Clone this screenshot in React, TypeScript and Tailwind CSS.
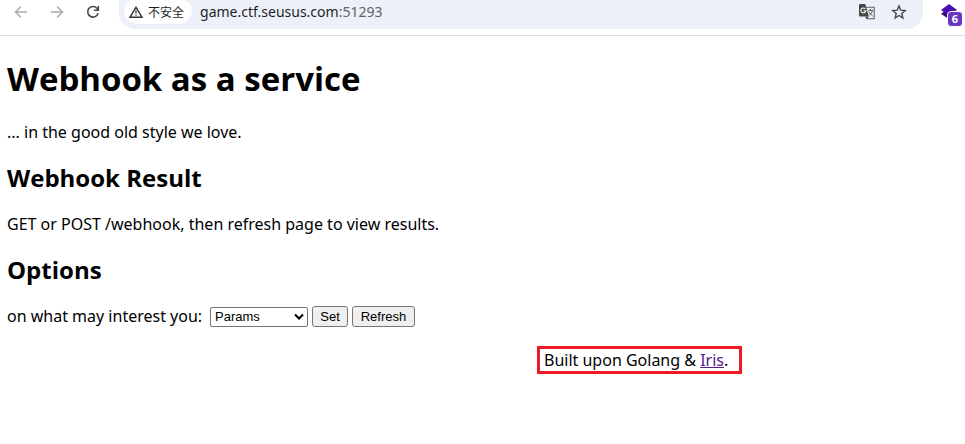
import React from "react";

const heading = "font-['Open_Sans','Noto_Sans',sans-serif] font-bold text-black";
const control =
  "h-[21px] rounded-[3px] border border-[#767676] bg-[#efefef] font-['Liberation_Sans',Arial,sans-serif] text-[13px] leading-4 text-black";

function BackIcon() {
  return (
    <svg width="14" height="14" viewBox="0 0 14 14" fill="none" stroke="currentColor" strokeWidth="1.5" aria-hidden="true">
      <path d="M13 7H2M7 1.5 1.5 7 7 12.5" />
    </svg>
  );
}

function ForwardIcon() {
  return (
    <svg width="14" height="14" viewBox="0 0 14 14" fill="none" stroke="currentColor" strokeWidth="1.5" aria-hidden="true">
      <path d="M1 7h11M7 1.5 12.5 7 7 12.5" />
    </svg>
  );
}

function ReloadIcon() {
  return (
    <svg width="14" height="14" viewBox="0 0 14 14" fill="none" stroke="currentColor" strokeWidth="1.6" aria-hidden="true">
      <path d="M12.1 8.2A5.3 5.3 0 1 1 10.9 3.2L12.4 4.8" />
      <path d="M12.3 1v4.2H8" />
    </svg>
  );
}

function WarningIcon() {
  return (
    <svg width="14" height="12" viewBox="0 0 14 12" aria-hidden="true">
      <path d="M7 1.3 13 11.2H1Z" fill="none" stroke="#333" strokeWidth="1.5" />
      <path d="M7 4.4v3.2M7 8.4v1.4" stroke="#333" strokeWidth="1.3" />
    </svg>
  );
}

function TranslateIcon() {
  return (
    <svg width="18" height="18" viewBox="0 0 18 18" aria-hidden="true">
      <path d="M8 4.2h8.2v11.6H9" fill="none" stroke="#5f6063" strokeWidth="1.1" />
      <path d="M2 1h5.3l3.5 12.6H2a1 1 0 0 1-1-1V2a1 1 0 0 1 1-1Z" fill="#474747" />
      <path d="M7.2 13.6h3.6l-2 3Z" fill="#474747" />
      <path d="M7.2 5.8A2.5 2.5 0 1 0 7.8 7.7H5.4" fill="none" stroke="#fff" strokeWidth="1.1" />
      <path d="M10.3 7.4h5M12.5 6v1.4M14.4 7.5c-.4 2-1.6 3.7-3 4.7M11 8.7c.7 1.6 2 3 3.6 4.3" fill="none" stroke="#5f6063" />
    </svg>
  );
}

function StarIcon() {
  return (
    <svg width="16" height="16" viewBox="0 0 16 16" aria-hidden="true">
      <path d="m8 1.9 1.7 4.3 4.6.3-3.5 3 1.1 4.5L8 11.5 4.1 14l1.1-4.5-3.5-3 4.6-.3Z" fill="none" stroke="#474747" strokeWidth="1.4" />
    </svg>
  );
}

function LayersIcon() {
  return (
    <svg width="18" height="16" viewBox="0 0 18 16" aria-hidden="true">
      <path d="m1 9.8 8-5 8 5-8 5.4Z" fill="#2b0a7c" />
      <path d="m1 6 8-6 8 6-8 6Z" fill="#4a0db0" />
    </svg>
  );
}

function Toolbar() {
  return (
    <header className="flex h-9 items-start border-b border-[#dedfe1] bg-white">
      <nav className="flex h-6 items-center gap-[22px] pl-[14px] text-[#aaaaaa]">
        <button type="button" aria-label="Back"><BackIcon /></button>
        <button type="button" aria-label="Forward"><ForwardIcon /></button>
        <button type="button" aria-label="Reload" className="text-[#474747]"><ReloadIcon /></button>
      </nav>
      <div className="ml-[19px] flex h-[29px] min-w-0 flex-1 items-start rounded-b-[16px] bg-[#ecf0f9] pl-[5px] pr-4">
        <button type="button" className="flex h-6 shrink-0 items-center gap-[5px] rounded-b-[14px] rounded-t-[10px] bg-white px-[5px] pr-2 font-['Noto_Sans_CJK_SC',sans-serif] text-[12px] leading-6 text-[#1f1f1f]">
          <WarningIcon />
          不安全
        </button>
        <div className="min-w-0 flex-1 pl-2 font-['Noto_Sans','Open_Sans',sans-serif] text-[14px] leading-6 text-[#1f1f1f]">
          game.ctf.seusus.com<span className="text-[#5f6368]">:51293</span>
        </div>
        <div className="flex h-6 items-center gap-[15px]">
          <button type="button" aria-label="Translate"><TranslateIcon /></button>
          <button type="button" aria-label="Bookmark"><StarIcon /></button>
        </div>
      </div>
      <button type="button" aria-label="Extension" className="relative ml-[17px] mr-[7px] mt-1 flex h-[22px] w-[18px] items-start">
        <LayersIcon />
        <span className="absolute left-[7px] top-[7px] h-4 w-4 rounded-[4px] border border-white bg-[#6b35c3] text-center font-['Open_Sans',sans-serif] text-[11px] font-bold leading-[14px] text-white">
          6
        </span>
      </button>
    </header>
  );
}

export default function App() {
  return (
    <div className="min-h-screen bg-white font-['Noto_Sans','Open_Sans',sans-serif] text-[16px] leading-[22px] text-black">
      <Toolbar />
      <main className="px-[7px] pt-5">
        <h1 className={`${heading} text-[33px] leading-[46px]`}>Webhook as a service</h1>
        <p className="mt-[19px]">... in the good old style we love.</p>
        <h2 className={`${heading} mt-[18px] text-[24px] leading-[34px]`}>Webhook Result</h2>
        <p className="mt-[18px]">GET or POST /webhook, then refresh page to view results.</p>
        <h2 className={`${heading} mt-[18px] text-[24px] leading-[34px]`}>Options</h2>
        <form className="mt-[18px] flex items-end gap-1" onSubmit={(e) => e.preventDefault()}>
          <label htmlFor="interest" className="w-[199px]">on what may interest you:</label>
          <div className="relative h-5 w-[98px]">
            <select
              id="interest"
              className="block h-5 w-full appearance-none rounded-[2px] border border-[#767676] bg-white pl-1 font-['Liberation_Sans',Arial,sans-serif] text-[13px] leading-4 text-black"
            >
              <option>Params</option>
            </select>
            <svg className="pointer-events-none absolute right-1 top-1.5" width="10" height="8" viewBox="0 0 10 8" fill="none" stroke="#000" strokeWidth="2" aria-hidden="true">
              <path d="m1 1.5 4 4 4-4" />
            </svg>
          </div>
          <button type="submit" className={`${control} w-9`}>Set</button>
          <button type="button" className={`${control} w-[63px]`}>Refresh</button>
        </form>
      </main>
      <footer className="mt-[19px] flex justify-end pr-[223px]">
        <p className="w-[205px] border-[3px] border-[#ed1c24] px-1">
          Built upon Golang &amp; <a href="#iris" className="text-[#551a8b] underline">Iris</a>.
        </p>
      </footer>
    </div>
  );
}
